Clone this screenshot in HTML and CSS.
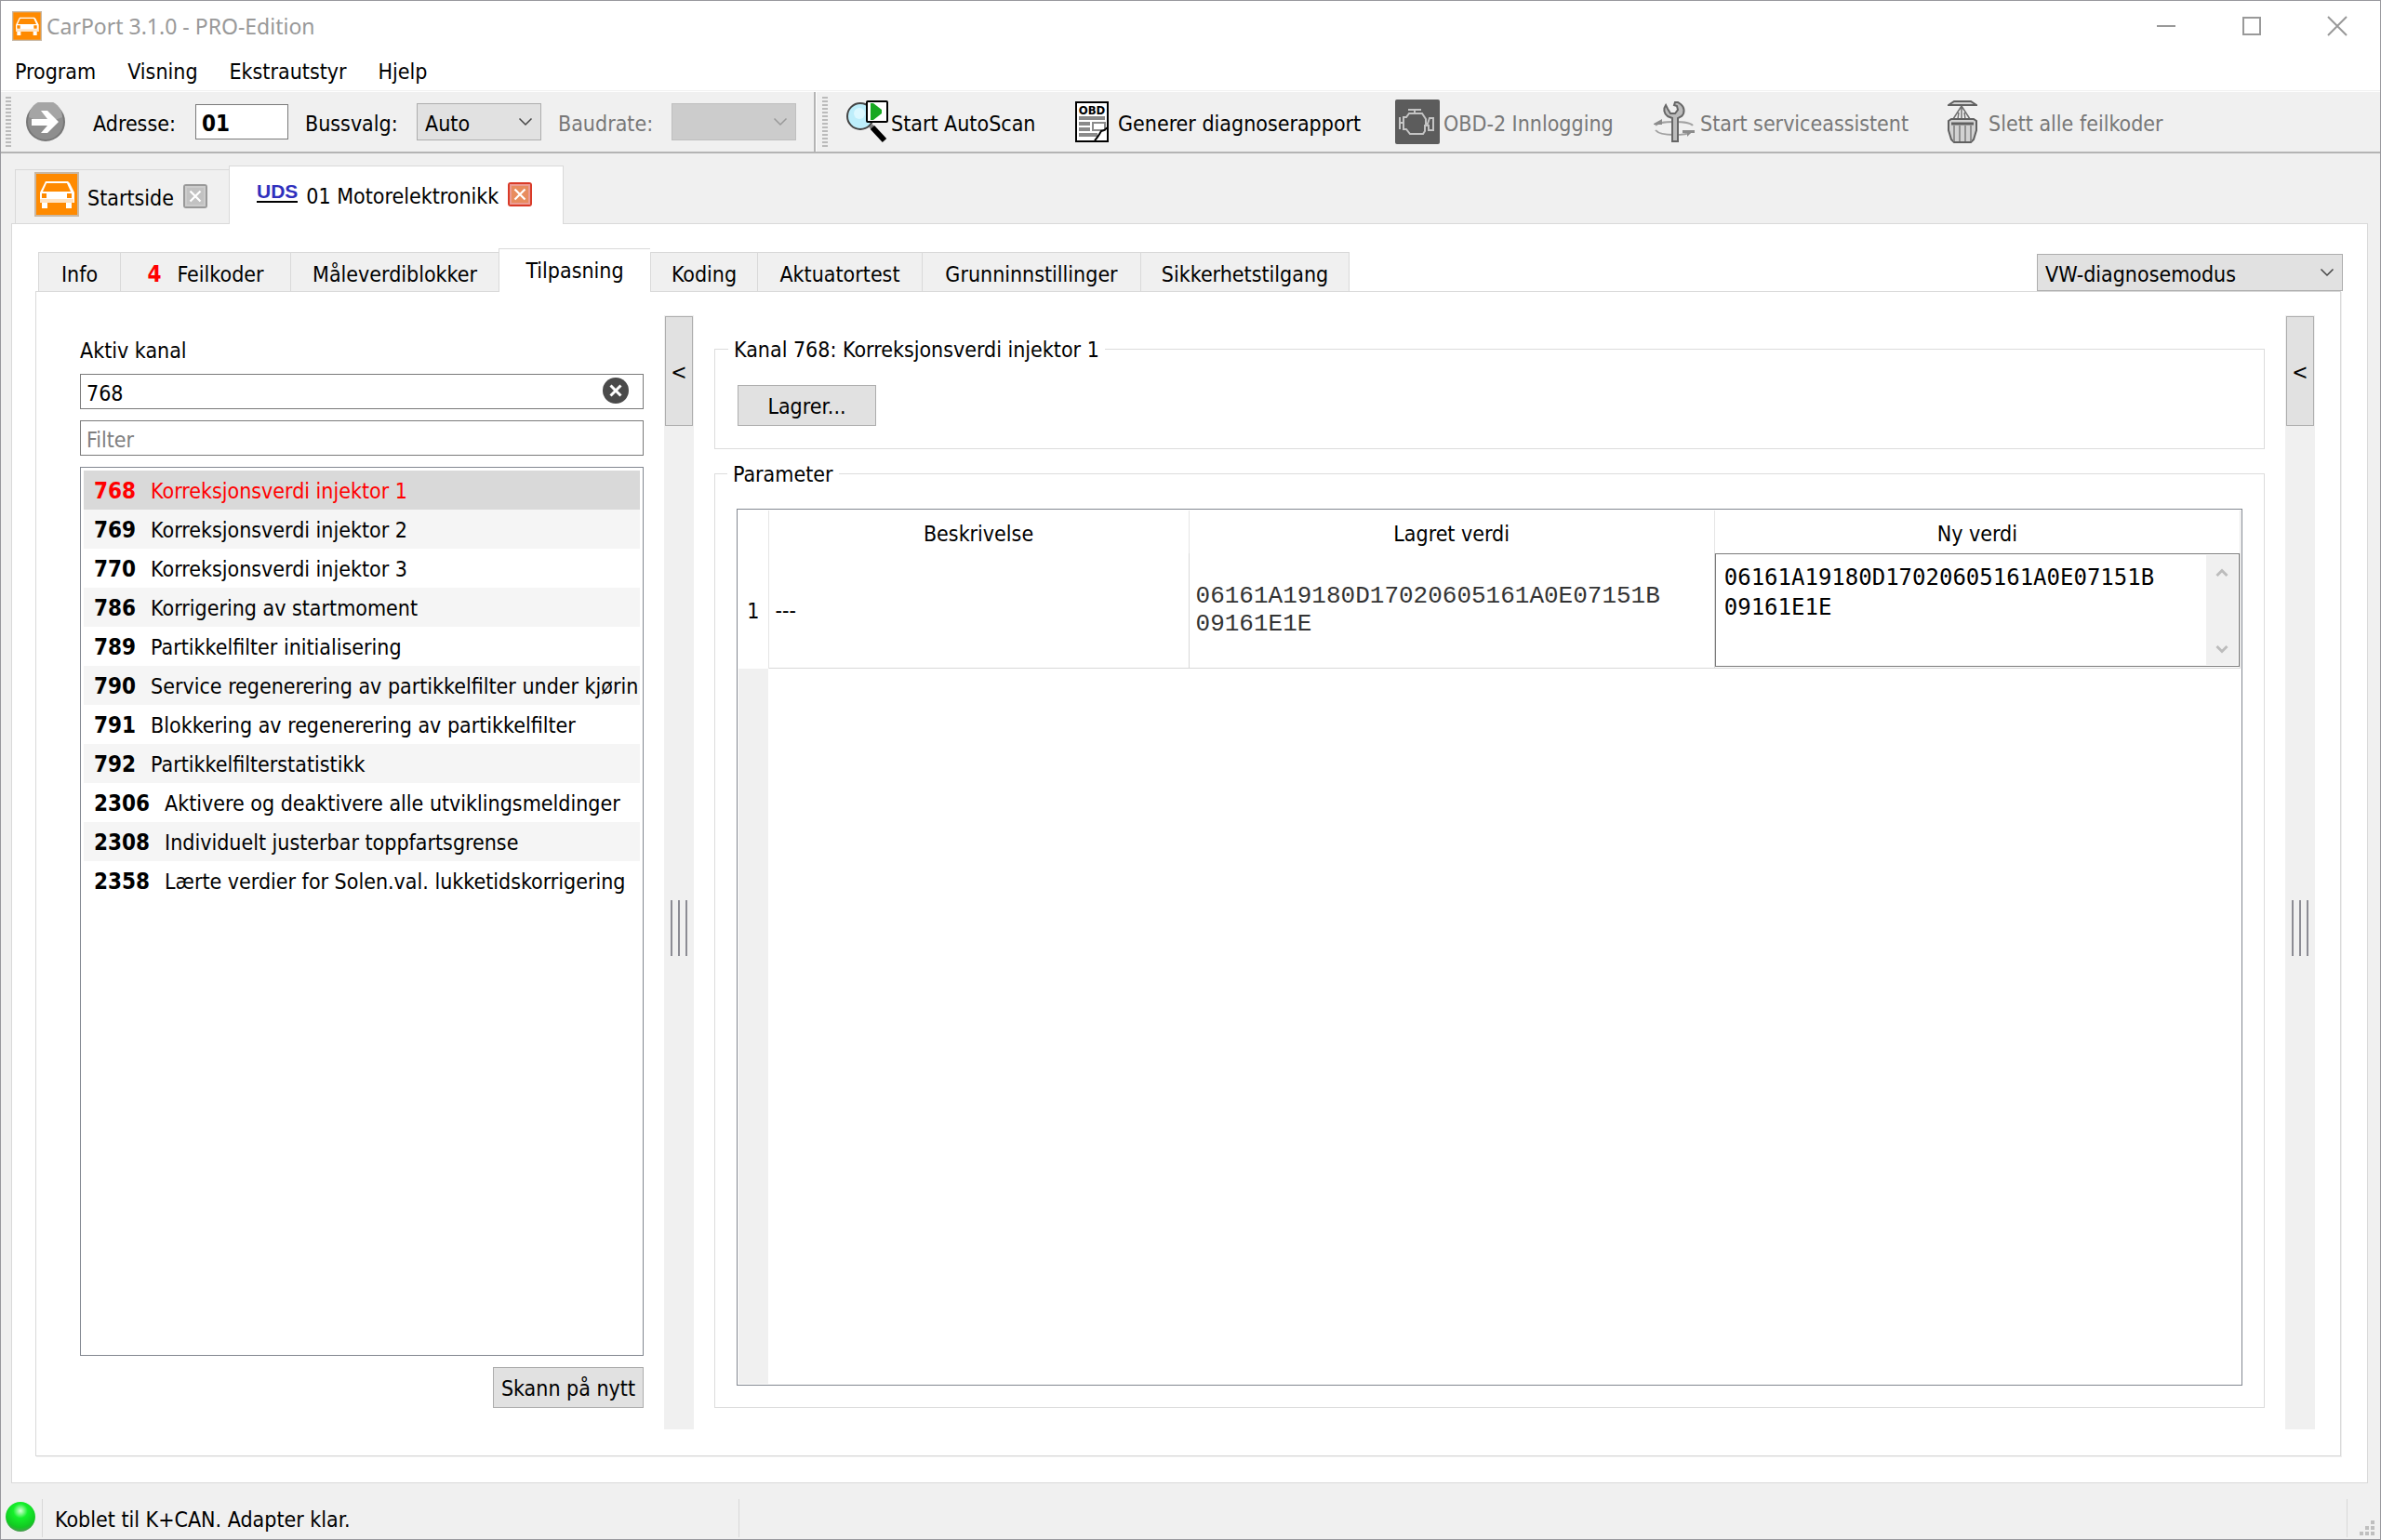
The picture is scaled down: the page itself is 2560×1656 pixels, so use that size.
FILE: index.html
```html
<!DOCTYPE html>
<html lang="no">
<head>
  <meta charset="UTF-8">
  <title>CarPort 3.1.0 - PRO-Edition</title>
  <link rel="stylesheet" href="styles.css">
</head>
<body>

<svg class="defs" aria-hidden="true">
  <symbol id="car" viewBox="0 0 48 48">
    <rect width="48" height="48" fill="#c9b8a4"/>
    <rect x="2" y="2" width="44" height="44" fill="#ff8a00"/>
    <path d="M12 10h24l2 2 5 10v11H6V22l5-10z" fill="#fff"/>
    <path d="M13 12h22l4 9H9z" fill="#ff8a00"/>
    <path d="M8 23h5v5H8zM35 23h5v5h-5z" fill="#ff8a00"/>
    <path d="M8 33h6v6H8zM34 33h6v6h-6z" fill="#fff"/>
    <path d="M6 29h36v4H6z" fill="#ffe3c2"/>
  </symbol>
  <symbol id="chevron" viewBox="0 0 16 16">
    <path d="M1.500 4.500L8 11l6.500-6.500" fill="none" stroke="currentColor" stroke-width="1.500"/>
  </symbol>
  <symbol id="chevron-thick" viewBox="0 0 16 16">
    <path d="M2.500 5L8 10.500 13.500 5" fill="none" stroke="currentColor" stroke-width="3"/>
  </symbol>
  <symbol id="cross" viewBox="0 0 28 28">
    <rect x="1" y="1" width="26" height="26" rx="3" fill="currentColor"/>
    <rect x="3" y="3" width="22" height="22" fill="#fff" opacity=".5"/>
    <rect x="5" y="5" width="18" height="18" class="cross-core"/>
    <path d="M8.500 8.500l11 11M19.500 8.500l-11 11" stroke="#fff" stroke-width="2.200"/>
  </symbol>
</svg>

<header class="titlebar">
  <svg class="title-icon"><use href="#car"/></svg>
  <h1>CarPort 3.1.0 - PRO-Edition</h1>
  <div class="window-buttons">
    <button aria-label="Minimer"><svg viewBox="0 0 20 20"><path d="M0 10h20"/></svg></button>
    <button aria-label="Maksimer"><svg viewBox="0 0 20 20"><path d="M1 1h18v18H1z"/></svg></button>
    <button aria-label="Lukk"><svg viewBox="0 0 20 20"><path d="M0 0l20 20M20 0L0 20"/></svg></button>
  </div>
</header>

<nav class="menubar">
  <button>Program</button>
  <button>Visning</button>
  <button>Ekstrautstyr</button>
  <button>Hjelp</button>
</nav>

<div class="toolbars">
  <div class="toolbar toolbar-address">
    <span class="grip"></span>
    <button class="go" aria-label="Gå til">
      <svg viewBox="0 0 42 42">
        <circle cx="21" cy="21" r="20" fill="#8e8e8e" stroke="#777" stroke-width="2"/>
        <path d="M3 16a18 18 0 0 1 36 0q-18 8-36 0z" fill="#a5a5a5"/>
        <path d="M6 18h17l-7-9h7l12 12-12 12h-7l7-8H6z" fill="#fff"/>
      </svg>
    </button>
    <label for="address">Adresse:</label>
    <input type="text" id="address" class="address" value="01">
    <label for="bus">Bussvalg:</label>
    <span class="combo combo-small">
      <select id="bus"><option>Auto</option></select>
      <svg><use href="#chevron"/></svg>
    </span>
    <label for="baud" class="disabled">Baudrate:</label>
    <span class="combo combo-small combo-disabled">
      <select id="baud" disabled></select>
      <svg><use href="#chevron"/></svg>
    </span>
  </div>
  <div class="toolbar toolbar-actions">
    <span class="grip"></span>
    <button class="action action-scan">
      <svg width="48" height="48" viewBox="0 0 48 48">
        <path d="M28 28l4 4" stroke="#777" stroke-width="5"/>
        <path d="M30 30l13 14" stroke="#000" stroke-width="6"/>
        <circle cx="17" cy="18" r="14" fill="#bdeefb" stroke="#444" stroke-width="2"/>
        <circle cx="16" cy="15" r="6" fill="#dcf8ff"/>
        <rect x="24" y="2" width="22" height="22" rx="1" fill="#fff" stroke="#000" stroke-width="2"/>
        <path d="M28 4h3l9 7v4l-9 7h-3z" fill="#17a821"/>
      </svg>
      <span>Start AutoScan</span>
    </button>
    <button class="action action-report">
      <svg width="36" height="44" viewBox="0 0 36 44">
        <rect x="1" y="1" width="34" height="42" fill="#fff" stroke="#000" stroke-width="2"/>
        <text x="18" y="14" class="obd-text">OBD</text>
        <path d="M4 18h28M4 24h12M4 30h12M4 36h20" stroke="#8a8a8a" stroke-width="4"/>
        <rect x="19" y="23" width="13" height="8" fill="#fff" stroke="#8a8a8a" stroke-width="2"/>
        <path d="M34 30L22 42h12z" fill="#fff"/>
        <path d="M34 28q-1 3-6 4-4 7-7 10" fill="none" stroke="#000" stroke-width="2"/>
      </svg>
      <span>Generer diagnoserapport</span>
    </button>
    <button class="action action-login" disabled>
      <svg width="48" height="48" viewBox="0 0 48 48">
        <rect width="48" height="48" rx="2" fill="#5c5c5c"/>
        <g fill="none" stroke="#c4c4c4" stroke-width="2">
          <path d="M14 11h14M21 11v5M5 19v13M5 25h4M9 19h3l3-4h14l4 6v5M9 18v14h3l4 5h14l2-3v-6h4v5h5V20h-4l-2 6h-3"/>
        </g>
      </svg>
      <span>OBD-2 Innlogging</span>
    </button>
    <button class="action action-service" disabled>
      <svg width="44" height="44" viewBox="0 0 44 44">
        <path d="M2 26q3-4 20-4 17 0 20 4M2 31q4 5 20 5 14 0 18-3" fill="none" stroke="#a2a2a2" stroke-width="2"/>
        <path d="M0 24l9-5v6H0zM31 31h13v3h-4l-4 4v-4h-5z" fill="#8c8c8c"/>
        <path d="M13 4c-3 4-2 9 2 12l5 2v25h6V18l4-2c4-4 3-10-1-13l-3-2h-3l-1 3 3 1 1 4-3 4h-5l-3-5z" fill="#bcbcbc" stroke="#666" stroke-width="2"/>
      </svg>
      <span>Start serviceassistent</span>
    </button>
    <button class="action action-clear" disabled>
      <svg width="32" height="46" viewBox="0 0 32 46">
        <path d="M1 5l6-4h18l6 4z" fill="#d2d2d2" stroke="#606060" stroke-width="2"/>
        <path d="M15 6L6 20M15 6v14M15 6l9 14M12 13l-1 7M18 13l1 7" fill="none" stroke="#707070" stroke-width="1.500"/>
        <path d="M1 22l3-2h24l3 2v10l-3 10-3 3H7l-3-3L1 32z" fill="#d2d2d2" stroke="#606060" stroke-width="2"/>
        <path d="M4 25h24" stroke="#606060" stroke-width="3"/>
        <path d="M7 27v17M13 27v17M19 27v17M25 27v17" stroke="#909090" stroke-width="2"/>
      </svg>
      <span>Slett alle feilkoder</span>
    </button>
  </div>
</div>

<main class="workspace">
  <div class="main-tabs">
    <div class="main-tab">
      <svg class="tab-icon"><use href="#car"/></svg>
      <span>Startside</span>
      <button class="close close-grey" aria-label="Lukk Startside"><svg><use href="#cross"/></svg></button>
    </div>
    <div class="main-tab main-tab-active">
      <span class="uds">UDS</span>
      <span>01 Motorelektronikk</span>
      <button class="close close-red" aria-label="Lukk 01 Motorelektronikk"><svg><use href="#cross"/></svg></button>
    </div>
  </div>

  <section class="main-panel">
    <div class="sub-bar">
      <div class="sub-tabs">
        <button>Info</button>
        <button><b class="count">4</b>Feilkoder</button>
        <button>Måleverdiblokker</button>
        <button class="active">Tilpasning</button>
        <button>Koding</button>
        <button>Aktuatortest</button>
        <button>Grunninnstillinger</button>
        <button>Sikkerhetstilgang</button>
      </div>
      <span class="combo combo-mode">
        <select aria-label="Diagnosemodus"><option>VW-diagnosemodus</option></select>
        <svg><use href="#chevron"/></svg>
      </span>
    </div>

    <div class="sub-panel">
      <div class="channels">
        <label for="channel">Aktiv kanal</label>
        <div class="clearable">
          <input type="text" id="channel" value="768">
          <button class="clear" aria-label="Tøm">
            <svg viewBox="0 0 28 28"><circle cx="14" cy="14" r="14" fill="#4a4a4a"/><path d="M8.500 8.500l11 11M19.500 8.500l-11 11" stroke="#fff" stroke-width="3"/></svg>
          </button>
        </div>
        <input type="text" placeholder="Filter" aria-label="Filter">
        <ul class="channel-list">
          <li class="selected"><b>768</b>Korreksjonsverdi injektor 1</li>
          <li><b>769</b>Korreksjonsverdi injektor 2</li>
          <li><b>770</b>Korreksjonsverdi injektor 3</li>
          <li><b>786</b>Korrigering av startmoment</li>
          <li><b>789</b>Partikkelfilter initialisering</li>
          <li><b>790</b>Service regenerering av partikkelfilter under kjørin</li>
          <li><b>791</b>Blokkering av regenerering av partikkelfilter</li>
          <li><b>792</b>Partikkelfilterstatistikk</li>
          <li><b>2306</b>Aktivere og deaktivere alle utviklingsmeldinger</li>
          <li><b>2308</b>Individuelt justerbar toppfartsgrense</li>
          <li><b>2358</b>Lærte verdier for Solen.val. lukketidskorrigering</li>
        </ul>
        <button class="push rescan">Skann på nytt</button>
      </div>

      <div class="splitter">
        <button class="push">&lt;</button>
        <span class="handle"></span>
      </div>

      <div class="details">
        <fieldset class="channel-box">
          <legend>Kanal 768: Korreksjonsverdi injektor 1</legend>
          <button class="push save">Lagrer...</button>
        </fieldset>
        <fieldset class="param-box">
          <legend>Parameter</legend>
          <div class="grid">
            <table>
              <thead>
                <tr>
                  <th class="col-num"></th>
                  <th class="col-desc">Beskrivelse</th>
                  <th class="col-value">Lagret verdi</th>
                  <th class="col-value">Ny verdi</th>
                </tr>
              </thead>
              <tbody>
                <tr>
                  <th>1</th>
                  <td>---</td>
                  <td class="stored">06161A19180D17020605161A0E07151B<br>09161E1E</td>
                  <td class="editing">
                    <div class="editor">
                      <textarea aria-label="Ny verdi">06161A19180D17020605161A0E07151B
09161E1E</textarea>
                      <div class="scrollbar">
                        <svg class="up"><use href="#chevron-thick"/></svg>
                        <svg><use href="#chevron-thick"/></svg>
                      </div>
                    </div>
                  </td>
                </tr>
              </tbody>
            </table>
            <div class="grid-rest"></div>
          </div>
        </fieldset>
      </div>

      <div class="splitter">
        <button class="push">&lt;</button>
        <span class="handle"></span>
      </div>
    </div>
  </section>
</main>

<footer class="statusbar">
  <svg class="led" viewBox="0 0 32 32">
    <defs>
      <radialGradient id="led" cx=".5" cy=".3" r=".7">
        <stop offset="0" stop-color="#d8ffd8"/>
        <stop offset=".35" stop-color="#14f02a"/>
        <stop offset=".8" stop-color="#12c822"/>
        <stop offset="1" stop-color="#4a9a50"/>
      </radialGradient>
    </defs>
    <circle cx="16" cy="16" r="15" fill="url(#led)"/>
  </svg>
  <span class="status-text">Koblet til K+CAN. Adapter klar.</span>
  <span class="status-space"></span>
  <svg class="size-grip" viewBox="0 0 16 16"><path d="M12 0h4v4h-4zM6 6h4v4H6zM12 6h4v4h-4zM0 12h4v4H0zM6 12h4v4H6zM12 12h4v4h-4z" fill="#bfbfbf"/></svg>
</footer>

</body>
</html>
```
FILE: styles.css
```css
* { box-sizing: border-box; }
body {
  display: flex; flex-direction: column; height: 100vh; margin: 0;
  border: 1px solid #98989d; background: #f0f0f0; color: #000;
  font: 23px/30px "DejaVu Sans Condensed", "DejaVu Sans", sans-serif;
}
button, input, select, textarea { margin: 0; padding: 0; border: 0; border-radius: 0; font: inherit; color: inherit; }
button { background: none; white-space: nowrap; }
svg { display: block; flex: none; }
.defs { position: absolute; width: 0; height: 0; }

/* title and menu */
.titlebar { display: flex; align-items: center; height: 54px; padding-left: 12px; background: #fff; color: #999; }
.title-icon { width: 32px; height: 32px; }
.titlebar h1 { margin: 0 auto 0 5px; font: 23px/30px "Noto Sans", sans-serif; }
.window-buttons { display: flex; }
.window-buttons button { width: 92px; padding: 0 36px; }
.window-buttons svg { width: 20px; height: 20px; fill: none; stroke: #999; stroke-width: 2; overflow: visible; }
.menubar { display: flex; gap: 34px; height: 43px; padding: 2px 15px 0; background: #fff; border-bottom: 1px solid #f0f0f0; }

/* toolbars */
.toolbars { display: flex; height: 67px; border-top: 1px solid #fff; border-bottom: 2px solid #b4b4b4; }
.toolbar { display: flex; align-items: center; padding-left: 5px; }
.toolbar-address { width: 876px; border-right: 2px solid #b4b4b4; }
.toolbar-actions { flex: 1; padding-left: 6px; border-left: 1px solid #fff; }
.grip { width: 6px; height: 54px; background: repeating-linear-gradient(#bbb 0 2px, transparent 2px 4px); }
.go { width: 42px; height: 42px; margin: 0 30px 0 16px; }
.toolbar label { width: 110px; padding-top: 4px; }
.address { width: 100px; height: 38px; margin-right: 18px; padding: 3px 0 0 6px; border: 1px solid #7a7a7a; background: #fff; font-size: 24px; font-weight: bold; }
.toolbar .address + label { width: 120px; }
.combo { position: relative; display: block; color: #444; }
.combo select { width: 100%; height: 40px; padding: 3px 0 0 8px; border: 1px solid #adadad; background: #e1e1e1; color: #000; appearance: none; }
.combo svg { position: absolute; right: 9px; top: 12px; width: 16px; height: 16px; pointer-events: none; }
.combo-small { width: 134px; margin-right: 18px; }
.toolbar .disabled { width: 122px; color: #787878; }
.combo-disabled { margin: 0; color: #999; }
.combo-disabled select { border-color: #bfbfbf; background: #ccc; opacity: 1; }
.action { display: flex; align-items: center; gap: 4px; }
.action span { padding-top: 4px; }
.action:disabled { color: #787878; }
.action-scan { width: 266px; padding-left: 18px; gap: 2px; }
.action-report { gap: 10px; width: 344px; }
.action-login { width: 278px; }
.action-service { gap: 6px; width: 316px; }
.action-clear { gap: 12px; }
.obd-text { font: bold 13px "DejaVu Sans Condensed", sans-serif; text-anchor: middle; }

/* document tabs */
.workspace { display: flex; flex: 1; flex-direction: column; min-height: 0; padding: 13px 13px 0 11px; }
.main-tabs { display: flex; align-items: flex-end; padding-left: 4px; }
.main-tab { display: flex; align-items: center; gap: 9px; width: 230px; height: 58px; padding: 0 0 6px 20px; border: 1px solid #d9d9d9; border-width: 1px 0 0 1px; }
.main-tab-active { z-index: 1; width: 360px; height: 63px; margin-bottom: -1px; padding-left: 29px; border-right-width: 1px; background: #fff; }
.main-tab span { padding-top: 8px; }
.tab-icon { width: 48px; height: 48px; }
.close, .close svg { width: 28px; height: 28px; }
.close { margin-top: 4px; }
.close-grey { color: #999; fill: #c2c2c2; }
.close-red { color: #d93a28; fill: #e88c5e; }
.main-tab .uds { padding: 0; border-bottom: 2px solid #000; color: #2f2fbd; font: bold 21px/20px "Liberation Sans", sans-serif; }

/* diagnostic tabs */
.main-panel { display: flex; flex: 1; flex-direction: column; min-height: 0; padding: 26px 28px 28px 25px; border: 1px solid #d9d9d9; background: #fff; }
.sub-bar { display: flex; align-items: flex-end; justify-content: space-between; margin-right: -2px; }
.sub-tabs { display: grid; grid-template-columns: 88px 183px 224px 163px 115px 177px 235px 225px; align-items: end; padding-left: 3px; }
.sub-tabs button { height: 42px; padding-top: 4px; border: 1px solid #d9d9d9; border-width: 1px 0 0 1px; background: #f0f0f0; }
.sub-tabs button:last-child { border-right-width: 1px; }
.sub-tabs .active { z-index: 1; height: 47px; margin-bottom: -1px; padding: 0; background: #fff; }
.count { margin-right: 17px; color: #f00; font-size: 24px; }
.combo-mode { width: 329px; }
.sub-panel { display: flex; flex: 1; min-height: 0; padding: 25px 27px 28px 47px; border: 1px solid #d9d9d9; box-shadow: 1px 1px #f0f0f0; }

/* channel list */
.channels { display: flex; flex-direction: column; width: 606px; padding: 23px 0; }
.channels label { margin-bottom: 10px; }
.channels input { width: 100%; height: 38px; margin-bottom: 12px; padding: 3px 0 0 6px; border: 1px solid #7a7a7a; background: #fff; }
.channels input::placeholder { color: #808080; opacity: 1; }
.clearable { position: relative; }
.clear { position: absolute; top: 4px; right: 16px; width: 28px; height: 28px; }
.channel-list { flex: 1; margin: 0 0 12px; padding: 3px 3px; border: 1px solid #828790; list-style: none; overflow: hidden; }
.channel-list li { height: 42px; padding: 7px 0 5px 11px; white-space: nowrap; overflow: hidden; }
.channel-list li:nth-child(even) { background: #f5f5f5; }
.channel-list .selected { background: #d9d9d9; color: #f00; }
.channel-list b { margin-right: 16px; font-size: 24px; }
.push { height: 44px; padding-top: 2px; border: 1px solid #adadad; background: #e1e1e1; }
.rescan { align-self: flex-end; width: 162px; }

/* splitters */
.splitter { display: flex; flex-direction: column; align-items: center; width: 32px; margin-left: 22px; padding: 1px; background: #f0f0f0; }
.splitter .push { width: 30px; height: 118px; }
.handle { width: 18px; height: 60px; margin: 510px 0 auto; border: 2px solid #8c8c94; border-width: 0 2px; background: linear-gradient(#8c8c94, #8c8c94) center / 2px 100% no-repeat; }

/* parameters */
.details { display: flex; flex: 1; flex-direction: column; min-width: 0; padding: 20px 0 23px 22px; }
fieldset { min-width: 0; margin: 0; border: 1px solid #dcdcdc; }
legend { padding: 2px 6px 0; }
.channel-box { height: 124px; margin-bottom: 10px; padding: 23px 24px 0; }
.channel-box legend, .param-box legend { margin-left: -10px; }
.save { width: 149px; }
.param-box { flex: 1; display: flex; flex-direction: column; padding: 22px 23px 23px; }
.grid { display: flex; flex: 1; flex-direction: column; height: 100%; padding: 1px; border: 1px solid #828790; }
.grid table { width: 100%; border-collapse: collapse; table-layout: fixed; }
.grid th { font-weight: normal; }
.grid thead th { height: 46px; padding: 4px 0 0; border-right: 1px solid #e5e5e5; }
.grid td { height: 123px; padding: 0 7px; border: 1px solid #d8d8d8; border-width: 0 1px 1px 0; }
.grid tbody th { border-right: 1px solid #e5e5e5; }
.col-num { width: 32px; }
.col-desc { width: 28%; }
.stored { color: #333; font: 26px/30px "Liberation Mono", monospace; }
.grid .editing { padding: 0; }
.editor { display: flex; height: 122px; padding: 1px; border: 1px solid #7a7a7a; }
.editor textarea { flex: 1; min-width: 0; padding: 8px; background: #fff; font: 24px/32px "DejaVu Sans Mono", monospace; resize: none; outline: 0; overflow: hidden; }
.scrollbar { display: flex; flex-direction: column; justify-content: space-between; align-items: center; width: 34px; padding: 11px 0 9px; background: #f0f0f0; color: #bcbcbc; }
.scrollbar svg { width: 16px; height: 16px; }
.scrollbar .up { transform: rotate(180deg); }
.grid-rest { flex: 1; width: 32px; background: #f0f0f0; }

/* status bar */
.statusbar { display: flex; align-items: center; height: 60px; padding: 14px 6px 0 4px; }
.led { width: 34px; height: 34px; margin-bottom: 2px; }
.status-text, .status-space { height: 41px; border-left: 1px solid #d8d8d8; }
.status-text { width: 749px; margin-left: 6px; padding: 7px 0 0 13px; }
.status-space { flex: 1; border-right: 1px solid #d8d8d8; }
.size-grip { align-self: flex-end; width: 16px; height: 16px; margin: 0 0 4px 13px; }
```
